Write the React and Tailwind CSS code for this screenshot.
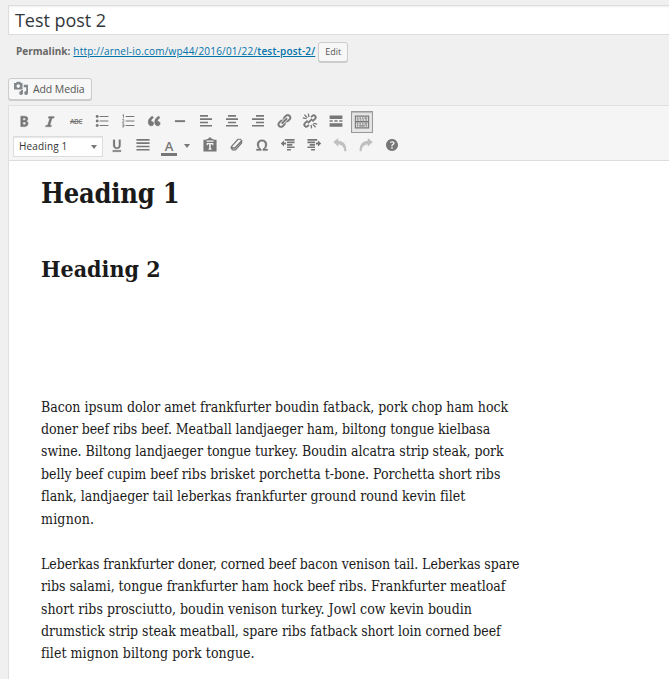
const SHAPES = {
  bold: <path d="M6 4v13h4.54c1.37 0 2.46-.33 3.26-1 .8-.66 1.2-1.58 1.2-2.77 0-.84-.17-1.51-.51-2.01s-.9-.85-1.67-1.03v-.09c.57-.1 1.02-.4 1.36-.9s.51-1.13.51-1.91c0-1.14-.39-1.98-1.17-2.5C12.75 4.26 11.5 4 9.78 4H6zm2.57 5.15V6.26h1.36c.73 0 1.27.11 1.61.32.34.22.51.58.51 1.07 0 .54-.16.92-.47 1.15s-.82.35-1.51.35h-1.5zm0 2.19h1.6c1.44 0 2.16.53 2.16 1.61 0 .6-.17 1.05-.51 1.34s-.86.43-1.57.43H8.57v-3.38z" stroke="currentColor" strokeWidth=".7" />,
  italic: <path d="M15.4 4.5H8.3l-.6 2h2.1L7 15.3H4.9l-.6 2h7.1l.6-2H9.9l2.7-8.8h2.2z" stroke="currentColor" strokeWidth=".4" />,
  bullets: (
    <>
      <circle cx="4" cy="4.4" r="1.8" /><circle cx="4" cy="10" r="1.8" /><circle cx="4" cy="15.6" r="1.8" />
      <path d="M7 3.8h11V5H7zM7 9.4h11v1.2H7zM7 15h11v1.2H7z" />
    </>
  ),
  numbers: (
    <>
      <path d="M7 3.8h11V5H7zM7 9.4h11v1.2H7zM7 15h11v1.2H7z" />
      <path fill="none" stroke="currentColor" strokeWidth="1" d="M3 3l1.4-1v4.5M2.8 8.2h1.8v1.6L3 11.6h2.2M2.8 13.5h2v4h-2M3 15.5h1.8" />
    </>
  ),
  quote: <path d="M9.49 13.22c0-.74-.2-1.38-.61-1.9-.62-.78-1.83-.88-2.53-.72-.29-1.65 1.11-3.75 2.92-4.65L7.88 4c-2.73 1.3-5.42 4.28-4.96 8.05C3.21 14.43 4.59 16 6.54 16c.85 0 1.56-.25 2.12-.75s.83-1.18.83-2.03zm8.05 0c0-.74-.2-1.38-.61-1.9-.63-.78-1.83-.88-2.53-.72-.29-1.65 1.11-3.75 2.92-4.65L15.93 4c-2.73 1.3-5.41 4.28-4.95 8.05.29 2.38 1.66 3.95 3.61 3.95.85 0 1.56-.25 2.12-.75s.83-1.18.83-2.03z" stroke="currentColor" strokeWidth=".8" />,
  rule: <path d="M3.7 9h12.6v2.4H3.7z" />,
  left: <path d="M2.5 2.6h10v2.1h-10zM2.5 6.7h15v2h-15zM2.5 10.8h10v2.1h-10zM2.5 15h15v2h-15z" />,
  center: <path d="M5 2.6h10v2.1H5zM2.5 6.7h15v2h-15zM5 10.8h10v2.1H5zM2.5 15h15v2h-15z" />,
  right: <path d="M7.5 2.6h10v2.1h-10zM2.5 6.7h15v2h-15zM7.5 10.8h10v2.1h-10zM2.5 15h15v2h-15z" />,
  justify: <path d="M1.8 2.6h16.4v2.1H1.8zM1.8 6.7h16.4v2H1.8zM1.8 10.8h16.4v2.1H1.8zM1.8 15h16.4v2H1.8z" />,
  link: <path d="M17.74 2.76c1.68 1.69 1.68 4.41 0 6.1l-1.53 1.52c-1.12 1.12-2.7 1.47-4.14 1.09l2.62-2.61.76-.77.76-.76c.84-.84.84-2.2 0-3.04-.84-.85-2.2-.85-3.04 0l-.77.76-3.38 3.38c-.37-1.44-.02-3.02 1.1-4.14l1.52-1.53c1.69-1.68 4.42-1.68 6.1 0zM8.59 13.43l5.34-5.34c.42-.42.42-1.1 0-1.52-.44-.43-1.13-.39-1.53 0l-5.33 5.34c-.42.42-.42 1.1 0 1.52.44.43 1.13.39 1.52 0zm-.76 2.29l4.14-4.15c.38 1.44.03 3.02-1.09 4.14l-1.52 1.53c-1.69 1.68-4.41 1.68-6.1 0-1.68-1.68-1.68-4.42 0-6.1l1.53-1.52c1.12-1.12 2.7-1.47 4.14-1.1l-4.14 4.15c-.85.84-.85 2.2 0 3.05.84.84 2.2.84 3.04 0z" stroke="currentColor" strokeWidth=".3" />,
  unlink: (
    <g fill="none" stroke="currentColor">
      <path strokeWidth="2.3" d="M11.3 5.2L13 3.600c2.300-2 5.500 1 3.500 3.400l-3.600 3.500M8.700 14.800L7 16.400c-2.300 2-5.500-1-3.500-3.400l3.600-3.500M12.600 7.300l-5.200 5.300" />
      <path strokeWidth="1.6" d="M1 6.200l4.700.8M3 2.200l3.600 3.600M8 .8l.6 4.400M19 13.800l-4.700-.8M17 17.800l-3.600-3.600M12 19.200l-.6-4.400" />
    </g>
  ),
  more: <path d="M2 3h16v4.600H2zM2 9.200h3.800v1.800H2zM8 9.200h4v1.800H8zM14.200 9.200H18v1.800h-3.800zM2 12.800h16v4.400H2z" />,
  toggle: (
    <>
      <path d="M1 2h18v16H1zM2.400 3.300v5.600h15.200V3.300zM2.400 10.500v6.100h15.200v-6.100z" fillRule="evenodd" />
      <path d="M3.500 4.500h2v1.400h-2zM6.700 4.500h2v1.400h-2zM9.900 4.500h2v1.400h-2zM13.100 4.500h3.400v1.400h-3.400zM3.500 6.900h3v1.200h-3zM7.600 6.900h2v1.200h-2zM10.800 6.900h2v1.200h-2zM14 6.900h2.500v1.200H14zM3.500 11.700h2v1.400h-2zM6.700 11.700h2v1.400h-2zM9.900 11.700h2v1.400h-2zM13.100 11.700h3.400v1.400h-3.400zM3.500 14.200h2v1.400h-2zM6.500 14.200h7v1.400h-7zM14.500 14.200h2v1.400h-2z" />
    </>
  ),
  underline: <path d="M14.500 3.500h-2.200v6.800c0 1.900-1 2.800-2.400 2.800-1.300 0-2.400-.9-2.400-2.800V3.500H5.200v6.900c0 2 1.100 4.600 4.700 4.600s4.600-2.600 4.600-4.600zm.5 15v-1.900H4.700v1.900z" stroke="currentColor" strokeWidth=".3" />,
  paste: (
    <path fillRule="evenodd" d="M1.800 3.500h3.800V2.400h2.200C8 1.300 8.800.7 10 .7s2 .6 2.200 1.700h2.200v1.100h3.800V18H1.800zM5.600 4.300v1.500h8.800V4.300zM5.800 7.600v2.600h1.200l.4-1.100h1.600v5.300l-.9.4v1h3.800v-1l-.9-.4V9.100h1.600l.4 1.100h1.200V7.600z" />
  ),
  eraser: (
    <g fill="none" stroke="currentColor" strokeWidth="1.500" strokeLinejoin="round">
      <path d="M12.600 2.800h3l1.600 2.100-.2 2.600-7.600 8.700H5.800l-1.900-2.200.3-2z" />
      <path strokeWidth="2" d="M4.300 12.300l1.400 1.500h3l8-8.500" />
    </g>
  ),
  omega: <path d="M10 5.400c1.270 0 2.240.36 2.910 1.080.66.71 1 1.760 1 3.130 0 1.280-.23 2.370-.69 3.270-.47.89-1.270 1.520-2.220 2.120v2h6v-2h-3.690c.92-.64 1.620-1.340 2.120-2.340.49-1.010.74-2.130.74-3.350 0-1.780-.55-3.190-1.650-4.220S11.920 3.540 10 3.540s-3.430.53-4.520 1.570c-1.100 1.040-1.650 2.440-1.650 4.200 0 1.210.24 2.310.73 3.330.48 1.010 1.190 1.710 2.100 2.360H3v2h6v-2c-.98-.64-1.800-1.280-2.240-2.170-.45-.89-.67-1.960-.67-3.220 0-1.370.33-2.410 1-3.130C7.750 5.760 8.720 5.400 10 5.400z" stroke="currentColor" strokeWidth=".4" />,
  outdent: <path d="M6 2.600h12.200v2H6zM8.800 5.700h9.400v2H8.800zM8.800 8.800h6.600v2H8.800zM8.800 11.900h9.400v2H8.800zM8.800 15h4.800v2H8.800zM1 8.100l4-3.600v2.500h2.600v2.300H5v2.500z" />,
  indent: <path d="M1.800 2.600H14v2H1.800zM1.800 5.700h9.400v2H1.800zM4.600 8.800h6.600v2H4.600zM1.800 11.900h9.400v2H1.800zM6.400 15h4.800v2H6.400zM19 8.100l-4-3.600v2.500h-2.600v2.300H15v2.500z" />,
  undo: <path d="M1.600 6.400l6.200-5v3.300c6 0 10.400 4.400 10.200 13h-2.600c-.3-5.700-3.100-8.400-7.600-8.400v3z" />,
  redo: <path d="M18.400 6.400l-6.200-5v3.300C6.200 4.700 1.800 9.100 2 17.700h2.600c.3-5.700 3.100-8.400 7.600-8.400v3z" />,
  help: <path transform="translate(-.7 -.7) scale(1.07)" d="M17 10c0-3.870-3.140-7-7-7-3.870 0-7 3.130-7 7s3.130 7 7 7c3.860 0 7-3.130 7-7zm-6.300 1.480H9.140v-.43c0-.38.08-.7.240-.98s.46-.57.88-.89c.41-.29.68-.53.81-.71.14-.18.2-.39.2-.62 0-.25-.09-.44-.28-.58-.19-.13-.45-.19-.79-.19-.58 0-1.250.19-2 .57l-.64-1.280c.87-.49 1.800-.74 2.770-.74.81 0 1.450.2 1.920.58.480.39.710.91.710 1.550 0 .43-.09.8-.29 1.110-.19.32-.57.67-1.110 1.060-.38.28-.61.490-.71.630-.1.150-.15.340-.15.570v.35zm-1.470 2.740c-.18-.17-.27-.42-.27-.73 0-.33.080-.58.260-.75s.43-.25.77-.25c.32 0 .57.090.75.260s.27.42.27.74c0 .3-.09.550-.27.720-.18.180-.43.270-.75.270-.33 0-.58-.09-.76-.26z" />,
};

function Tool({ name, className = "w-[26px]" }) {
  return (
    <button aria-label={name} className={`flex h-[22px] shrink-0 items-center justify-center ${className}`}>
      <svg viewBox="0 0 20 20" fill="currentColor" className="size-4 shrink-0">{SHAPES[name]}</svg>
    </button>
  );
}

function Strike() {
  return (
    <button aria-label="strikethrough" className="flex h-[22px] w-[26px] shrink-0 items-center justify-center">
      <span className="text-[7px] leading-none font-semibold tracking-[-0.5px] line-through">ABC</span>
    </button>
  );
}

function Caret() {
  return <span className="border-x-[3px] border-t-4 border-x-transparent border-t-[#777]" />;
}

const FIRST = [
  ["Bacon ipsum dolor amet frankfurter boudin fatback, pork chop ham hock", "tracking-[-0.014px]"],
  ["doner beef ribs beef. Meatball landjaeger ham, biltong tongue kielbasa", "tracking-[-0.08px]"],
  ["swine. Biltong landjaeger tongue turkey. Boudin alcatra strip steak, pork", "tracking-[-0.045px]"],
  ["belly beef cupim beef ribs brisket porchetta t-bone. Porchetta short ribs", "tracking-[-0.014px]"],
  ["flank, landjaeger tail leberkas frankfurter ground round kevin filet", "tracking-[-0.025px]"],
  ["mignon.", "tracking-[0.2px]"],
];
const SECOND = [
  ["Leberkas frankfurter doner, corned beef bacon venison tail. Leberkas spare", "tracking-[-0.075px]"],
  ["ribs salami, tongue frankfurter ham hock beef ribs. Frankfurter meatloaf", "tracking-[-0.035px]"],
  ["short ribs prosciutto, boudin venison turkey. Jowl cow kevin boudin", "tracking-[0.01px]"],
  ["drumstick strip steak meatball, spare ribs fatback short loin corned beef", "tracking-[-0.06px]"],
  ["filet mignon biltong pork tongue.", "tracking-[0.06px]"],
];

function Paragraph({ lines, className }) {
  return (
    <p className={`text-[14px] leading-[22.4px] whitespace-nowrap ${className}`}>
      {lines.map(([text, tracking]) => (
        <span key={text} className={`block ${tracking}`}>{text}</span>
      ))}
    </p>
  );
}

export default function App() {
  return (
    <div className="flex h-[679px] w-[669px] flex-col overflow-hidden bg-[#f0f0f0] pl-2 font-['Open_Sans',sans-serif] text-[#444]">
      <div className="mt-[5px] flex h-[30px] shrink-0 items-center border border-r-0 border-[#ddd] bg-white pl-[6px] text-[18px] tracking-[-0.05px] text-[#32373c] shadow-[inset_0_1px_2px_rgba(0,0,0,0.07)]">
        Test post 2
      </div>
      <div className="mt-[7px] flex h-5 shrink-0 items-center pl-2 text-[10px] whitespace-nowrap text-[#666]">
        <strong className="mr-[3px] pb-px font-bold">Permalink:</strong>
        <a className="pb-px tracking-[0.19px] text-[#0073aa] underline">http://arnel-io.com/wp44/2016/01/22/<b className="font-semibold">test-post-2/</b></a>
        <button className="ml-[3px] h-5 w-[30px] shrink-0 rounded-[3px] border border-[#ccc] bg-[#f7f7f7] text-[9px] text-[#555] shadow-[0_1px_0_#ccc]">Edit</button>
      </div>
      <button className="mt-4 flex h-[22px] w-[84px] shrink-0 items-center gap-[5px] rounded-[3px] border border-[#ccc] bg-[#f7f7f7] pl-[5px] text-[10.5px] whitespace-nowrap text-[#555] shadow-[0_1px_0_#ccc]">
        <svg viewBox="0 0 14 14" className="mb-[2px] size-[14px] shrink-0 text-[#82878c]" fill="currentColor">
          <path fillRule="evenodd" d="M0 2h2l.8-1.300h3.400L7 2h1.500v6.500H0zM4.300 3.300a1.800 1.800 0 1 0 0 3.600 1.800 1.800 0 0 0 0-3.600z" />
          <path d="M9.700 3.800H14V12a1.900 1.900 0 1 1-1.800-1.900V6.200H9.700zM7.200 9H9v3a1.900 1.900 0 1 1-1.800-1.900z" />
        </svg>
        <span className="pt-[2px] tracking-[-0.1px]">Add Media</span>
      </button>
      <div className="mt-[5px] flex min-h-0 flex-1 flex-col border-t border-l border-[#e0e0e0] bg-white">
        <div className="h-[55px] shrink-0 border-b border-[#ddd] bg-[#f5f5f5] pt-1 text-[#777]">
          <div className="flex pl-[2px]">
            <Tool name="bold" /><Tool name="italic" /><Strike /><Tool name="bullets" /><Tool name="numbers" />
            <Tool name="quote" /><Tool name="rule" /><Tool name="left" /><Tool name="center" /><Tool name="right" />
            <Tool name="link" /><Tool name="unlink" /><Tool name="more" />
            <Tool name="toggle" className="mx-[2px] mt-px h-[21px] w-[22px] border border-[#999] bg-[#e6e6e6] shadow-[inset_0_1px_1px_rgba(0,0,0,0.2)]" />
          </div>
          <div className="mt-[2px] flex items-start pl-1">
            <div className="mt-px flex h-[21px] w-[90px] shrink-0 items-center justify-between border border-[#ddd] bg-white px-[5px] text-[10px] tracking-[0.15px] text-[#333] shadow-[inset_0_1px_1px_rgba(0,0,0,0.1)]">
              Heading 1
              <Caret />
            </div>
            <div className="-mt-px flex items-center pl-px">
              <Tool name="underline" /><Tool name="justify" />
              <button aria-label="text color" className="flex h-[22px] w-[26px] shrink-0 flex-col items-center justify-end">
                <span className="text-[13px] leading-[13px] font-semibold">A</span>
                <span className="h-[3px] w-4 bg-[#777]" />
              </button>
              <span className="flex w-[15px] pt-[2px] pl-[2px]"><Caret /></span>
              <Tool name="paste" /><Tool name="eraser" /><Tool name="omega" /><Tool name="outdent" /><Tool name="indent" />
              <Tool name="undo" className="w-[26px] text-[#c0c0c0]" /><Tool name="redo" className="w-[26px] text-[#c0c0c0]" /><Tool name="help" />
            </div>
          </div>
        </div>
        <article className="pl-8 font-['DejaVu_Serif_Condensed','DejaVu_Serif',serif] text-[#1a1a1a]">
          <h1 className="mt-[15px] text-[27px] leading-9 font-bold tracking-[-0.2px] whitespace-nowrap">Heading 1</h1>
          <h2 className="mt-[41px] text-[23px] leading-8 font-bold whitespace-nowrap">Heading 2</h2>
          <Paragraph lines={FIRST} className="mt-[110.5px]" />
          <Paragraph lines={SECOND} className="mt-[22.8px]" />
        </article>
      </div>
    </div>
  );
}
